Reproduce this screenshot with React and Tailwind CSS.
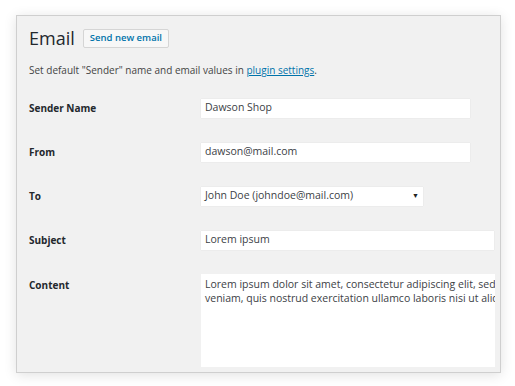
export default function App() {
  const rows = [
    { label: "Sender Name", value: "Dawson Shop", width: "w-[269px]" },
    { label: "From", value: "dawson@mail.com", width: "w-[269px]" },
  ];

  return (
    <div className="w-[515px] h-[386px] bg-white pt-[15px] pl-[16px] font-['Open_Sans',sans-serif]">
      <div className="w-[485px] h-[358px] bg-[#f1f1f1] border border-[#cfcfcf] shadow-[0_2px_12px_rgba(0,0,0,0.12)] pl-[12px] pt-[11px] overflow-hidden">
        <div className="flex items-center gap-[8px]">
          <h1 className="text-[18px] leading-[22px] text-[#23282d]">Email</h1>
          <button className="h-[19px] px-[6px] bg-[#f7f7f7] border border-[#d5d5d5] rounded-[2px] text-[9.5px] font-semibold text-[#0073aa] leading-none">
            Send new email
          </button>
        </div>
        <p className="mt-[14px] text-[10px] leading-[14px] text-[#444]">
          Set default "Sender" name and email values in{" "}
          <a className="text-[#0073aa] underline">plugin settings</a>.
        </p>

        <div className="mt-[9px] flex flex-col">
          {rows.map((r) => (
            <div key={r.label} className="flex items-center h-[44px]">
              <div className="w-[172px] text-[10px] font-bold text-[#23282d]">{r.label}</div>
              <div className={`${r.width} h-[19px] bg-white shadow-[0_0_1px_rgba(0,0,0,0.12)] px-[4px] flex items-center text-[10.5px] text-[#3c4146]`}>
                {r.value}
              </div>
            </div>
          ))}
          <div className="flex items-center h-[44px]">
            <div className="w-[172px] text-[10px] font-bold text-[#23282d]">To</div>
            <div className="w-[222px] h-[19px] bg-white shadow-[0_0_1px_rgba(0,0,0,0.12)] pl-[4px] pr-[4px] flex items-center justify-between text-[10.5px] text-[#3c4146]">
              <span>John Doe (johndoe@mail.com)</span>
              <span className="text-[7px] text-[#222]">▼</span>
            </div>
          </div>
          <div className="flex items-center h-[44px]">
            <div className="w-[172px] text-[10px] font-bold text-[#23282d]">Subject</div>
            <div className="w-[293px] h-[19px] bg-white shadow-[0_0_1px_rgba(0,0,0,0.12)] px-[4px] flex items-center text-[10.5px] text-[#3c4146]">
              Lorem ipsum
            </div>
          </div>
          <div className="flex items-start mt-[12px]">
            <div className="w-[172px] pt-[4px] text-[10px] font-bold text-[#23282d]">Content</div>
            <div className="w-[294px] h-[93px] bg-white overflow-hidden">
              <div className="px-[4px] pt-[3px] text-[10.5px] leading-[14px] text-[#3c4146] whitespace-nowrap">
                <div>Lorem ipsum dolor sit amet, consectetur adipiscing elit, sed do eiusmod tempor incididunt ut labore et dolore magna aliqua. Ut enim ad minim</div>
                <div>veniam, quis nostrud exercitation ullamco laboris nisi ut aliquip ex ea commodo consequat.</div>
              </div>
            </div>
          </div>
        </div>
      </div>
    </div>
  );
}
